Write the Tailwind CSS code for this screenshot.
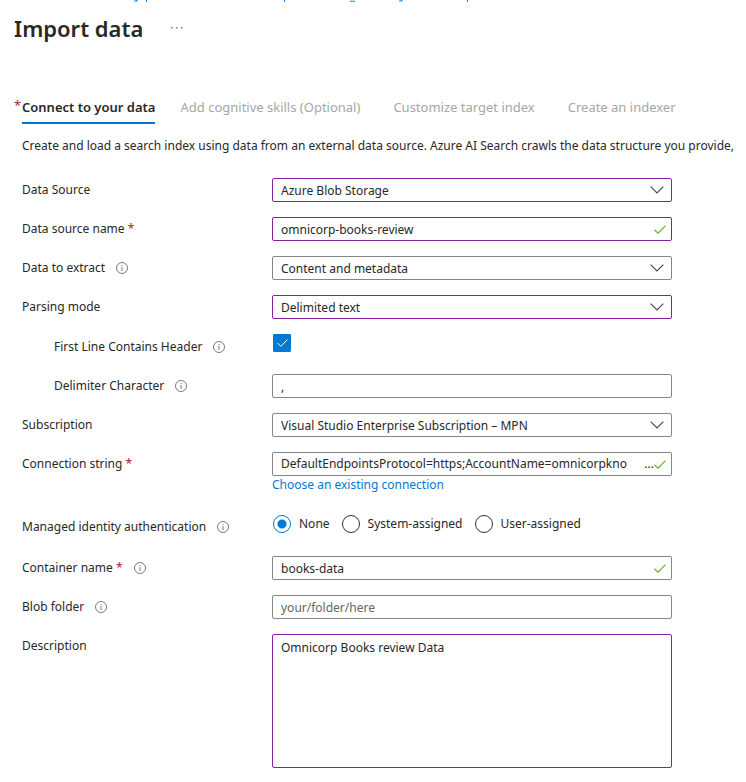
<!DOCTYPE html>
<html lang="en">
<head>
<meta charset="utf-8">
<meta name="viewport" content="width=device-width, initial-scale=1">
<title>Import data</title>
<script src="https://cdn.jsdelivr.net/npm/@tailwindcss/browser@4"></script>
</head>
<body class="bg-white font-['Noto_Sans','Open_Sans',sans-serif] text-[12px] leading-[18px] text-[#292827] overflow-x-hidden">
<svg class="hidden" aria-hidden="true">
  <symbol id="info" viewBox="0 0 12 12"><circle cx="6" cy="6" r="5.5" fill="none" stroke="#6b6b6b" stroke-width="0.9"/><path d="M6 5v4M6 3v1" stroke="#777" stroke-width="1" fill="none"/></symbol>
  <symbol id="chevron" viewBox="0 0 14 8"><path d="M0.7 0.7L7 7L13.3 0.7" stroke="#444" stroke-width="1.1" fill="none"/></symbol>
  <symbol id="tick" viewBox="0 0 12 9"><path d="M0.5 4.8L4 8.2L11.6 0.6" stroke="#6bb02c" stroke-width="1.2" fill="none"/></symbol>
</svg>
<header class="px-[14px]">
  <svg class="-ml-[14px] block h-[2px] w-[480px]" viewBox="0 0 480 2" fill="#2b83d6" aria-hidden="true"><path d="M136 0h2l-1 1.5h-3v-1h2zM146 0h1v2h-1zM284 0h1v2h-1zM350 .8h5v1h-5zM401 0h2l-1 1.5h-3v-1h2zM467 0h1v2h-1z"/></svg>
  <div class="flex items-center gap-7 pt-[10px]">
    <h1 class="text-[22px] leading-[32px] font-semibold">Import data</h1>
    <button type="button" aria-label="More actions"><svg class="h-[2px] w-3" viewBox="0 0 12 2" fill="#777"><path d="M0 0h1.5v1.5H0zM5 0h1.5v1.5H5zM10 0h1.5v1.5H10z"/></svg></button>
  </div>
</header>
<main class="pt-[54px] pl-[22px]">
  <nav class="flex gap-[33px] whitespace-nowrap text-[13px] text-[#a6a6a6]" aria-label="Steps">
    <button type="button" class="relative -mr-2 border-b-2 border-[#0078d4] pb-[6px] font-semibold text-[#292827]"><span class="absolute -left-2 -top-0.5 font-normal text-[#a4262c]">*</span>Connect to your data</button>
    <button type="button" class="pb-2">Add cognitive skills (Optional)</button>
    <button type="button" class="pb-2">Customize target index</button>
    <button type="button" class="pb-2">Create an indexer</button>
  </nav>
  <p class="mt-[13px] whitespace-nowrap">Create and load a search index using data from an external data source. Azure AI Search crawls the data structure you provide,</p>
  <form class="mt-[23px] flex flex-col gap-[15px] pr-4 pb-3">
    <div class="flex">
      <label for="source" class="w-[250px] shrink-0 leading-6">Data Source</label>
      <div class="relative max-w-[400px] flex-1">
        <select id="source" class="block h-6 w-full appearance-none rounded-[2px] border border-[#881fa3] bg-white px-2 pt-0.5"><option>Azure Blob Storage</option></select>
        <svg class="pointer-events-none absolute top-2 right-2 h-2 w-[14px]"><use href="#chevron"/></svg>
      </div>
    </div>
    <div class="flex">
      <label for="name" class="w-[250px] shrink-0 leading-6">Data source name <span class="text-[#a4262c]">*</span></label>
      <div class="relative max-w-[400px] flex-1">
        <input id="name" value="omnicorp-books-review" class="block h-6 w-full rounded-[2px] border border-[#881fa3] pr-6 pl-2">
        <svg class="pointer-events-none absolute top-2 right-[6px] h-[9px] w-3"><use href="#tick"/></svg>
      </div>
    </div>
    <div class="flex">
      <div class="flex w-[250px] shrink-0 items-center gap-[11px]"><label for="extract">Data to extract</label><svg class="size-3"><use href="#info"/></svg></div>
      <div class="relative max-w-[400px] flex-1">
        <select id="extract" class="block h-6 w-full appearance-none rounded-[2px] border border-[#858585] bg-white px-2 pt-0.5"><option>Content and metadata</option></select>
        <svg class="pointer-events-none absolute top-2 right-2 h-2 w-[14px]"><use href="#chevron"/></svg>
      </div>
    </div>
    <div class="flex">
      <label for="mode" class="w-[250px] shrink-0 leading-6">Parsing mode</label>
      <div class="relative max-w-[400px] flex-1">
        <select id="mode" class="block h-6 w-full appearance-none rounded-[2px] border border-[#881fa3] bg-white px-2 pt-0.5"><option>Delimited text</option></select>
        <svg class="pointer-events-none absolute top-2 right-2 h-2 w-[14px]"><use href="#chevron"/></svg>
      </div>
    </div>
    <div class="flex h-[25px]">
      <div class="flex w-[250px] shrink-0 items-center gap-[11px] pl-8"><label for="header">First Line Contains Header</label><svg class="size-3"><use href="#info"/></svg></div>
      <div class="relative ml-px size-[18px]">
        <input id="header" type="checkbox" checked class="block size-[18px] appearance-none rounded-[1px] border border-[#323130] checked:border-[#0078d4] checked:bg-[#0078d4]">
        <svg class="pointer-events-none absolute top-[5px] left-1 h-2 w-[11px]" viewBox="0 0 11 8"><path d="M0.5 4L3.8 7.3L10.5 0.6" stroke="#fff" fill="none"/></svg>
      </div>
    </div>
    <div class="flex">
      <div class="flex w-[250px] shrink-0 items-center gap-[11px] pl-8"><label for="delimiter">Delimiter Character</label><svg class="size-3"><use href="#info"/></svg></div>
      <input id="delimiter" value="," class="block h-6 max-w-[400px] min-w-0 flex-1 rounded-[2px] border border-[#858585] px-2">
    </div>
    <div class="flex">
      <label for="subscription" class="w-[250px] shrink-0 leading-6">Subscription</label>
      <div class="relative max-w-[400px] flex-1">
        <select id="subscription" class="block h-6 w-full appearance-none rounded-[2px] border border-[#858585] bg-white px-2 pt-0.5"><option>Visual Studio Enterprise Subscription – MPN</option></select>
        <svg class="pointer-events-none absolute top-2 right-2 h-2 w-[14px]"><use href="#chevron"/></svg>
      </div>
    </div>
    <div class="flex">
      <label for="connection" class="w-[250px] shrink-0 leading-6">Connection string <span class="text-[#a4262c]">*</span></label>
      <div class="mb-[6px] max-w-[400px] flex-1">
        <div class="flex h-6 items-center rounded-[2px] border border-[#858585] pr-[5px] pl-2">
          <input id="connection" value="DefaultEndpointsProtocol=https;AccountName=omnicorpkno" class="min-w-0 flex-1">
          <span>...</span>
          <svg class="h-[9px] w-3"><use href="#tick"/></svg>
        </div>
        <a href="#" class="block text-[#0078d4]">Choose an existing connection</a>
      </div>
    </div>
    <div class="flex pb-0.5" role="radiogroup" aria-labelledby="identity-label">
      <div class="flex h-6 w-[250px] shrink-0 items-center gap-[11px]"><span id="identity-label">Managed identity authentication</span><svg class="size-3"><use href="#info"/></svg></div>
      <div class="ml-px flex h-[18px] gap-3 whitespace-nowrap">
        <label class="flex gap-2"><input type="radio" name="identity" checked class="size-[18px] appearance-none rounded-full border border-[#323130] checked:border-[#0078d4] checked:bg-[radial-gradient(circle,#0078d4_4px,transparent_5px)]">None</label>
        <label class="flex gap-2"><input type="radio" name="identity" class="size-[18px] appearance-none rounded-full border border-[#323130] checked:border-[#0078d4] checked:bg-[radial-gradient(circle,#0078d4_4px,transparent_5px)]">System-assigned</label>
        <label class="flex gap-2"><input type="radio" name="identity" class="size-[18px] appearance-none rounded-full border border-[#323130] checked:border-[#0078d4] checked:bg-[radial-gradient(circle,#0078d4_4px,transparent_5px)]">User-assigned</label>
      </div>
    </div>
    <div class="flex">
      <div class="flex w-[250px] shrink-0 items-center gap-[11px]"><label for="container">Container name <span class="text-[#a4262c]">*</span></label><svg class="size-3"><use href="#info"/></svg></div>
      <div class="relative max-w-[400px] flex-1">
        <input id="container" value="books-data" class="block h-6 w-full rounded-[2px] border border-[#858585] pr-6 pl-2">
        <svg class="pointer-events-none absolute top-2 right-[6px] h-[9px] w-3"><use href="#tick"/></svg>
      </div>
    </div>
    <div class="flex">
      <div class="flex w-[250px] shrink-0 items-center gap-[11px]"><label for="folder">Blob folder</label><svg class="size-3"><use href="#info"/></svg></div>
      <input id="folder" placeholder="your/folder/here" class="block h-6 max-w-[400px] min-w-0 flex-1 rounded-[2px] border border-[#858585] px-2 placeholder:text-[#666]">
    </div>
    <div class="flex">
      <label for="description" class="w-[250px] shrink-0 leading-6">Description</label>
      <textarea id="description" class="block h-[134px] max-w-[400px] min-w-0 flex-1 resize-none rounded-[2px] border border-[#881fa3] px-2 py-1">Omnicorp Books review Data</textarea>
    </div>
  </form>
</main>
</body>
</html>
